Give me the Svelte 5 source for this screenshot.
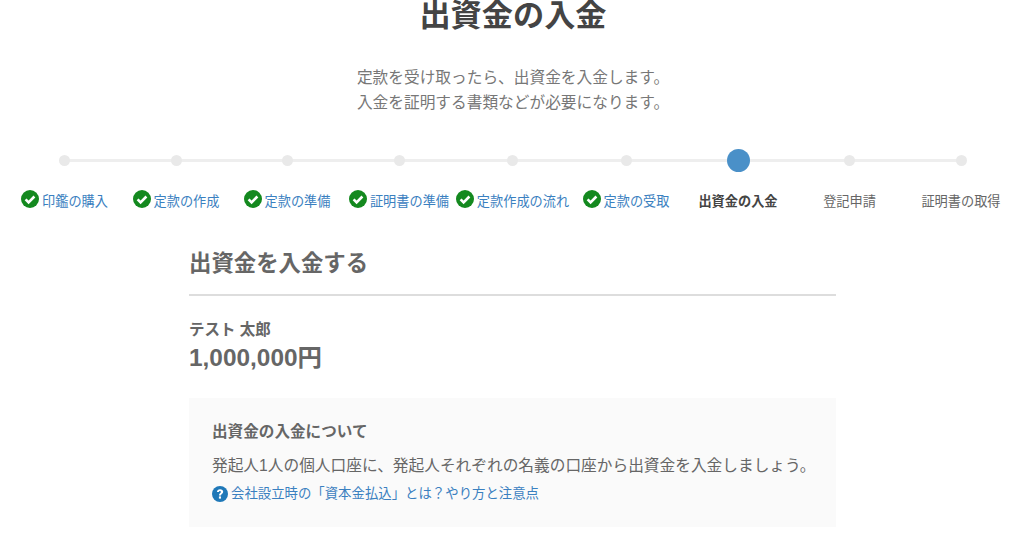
<script>
  const steps = [
    { label: "印鑑の購入", done: true, w: 112 },
    { label: "定款の作成", done: true, w: 111 },
    { label: "定款の準備", done: true, w: 111 },
    { label: "証明書の準備", done: true, w: 113 },
    { label: "定款作成の流れ", done: true, w: 114 },
    { label: "定款の受取", done: true, w: 113 },
    { label: "出資金の入金", current: true, w: 111 },
    { label: "登記申請", w: 112 },
    { label: "証明書の取得", w: 111 },
  ];
</script>

<div class="page">
  <header class="head">
    <h1>出資金の入金</h1>
    <p class="lead">定款を受け取ったら、出資金を入金します。<br />入金を証明する書類などが必要になります。</p>
  </header>

  <ol class="steps">
    {#each steps as step, i}
      <li class="step" class:current={step.current} class:done={step.done} class:first={i === 0} class:last={i === steps.length - 1} style="width: {step.w}px">
        <span class="track"><span class="dot"></span></span>
        <span class="label">
          {#if step.done}
            <svg class="check" viewBox="0 0 18 18" aria-hidden="true">
              <circle cx="9" cy="9" r="9" fill="#14891f" />
              <path d="M4.6 9.3l3 3 5.8-5.8" fill="none" stroke="#fff" stroke-width="2.6" />
            </svg>
          {/if}
          <span class="text">{step.label}</span>
        </span>
      </li>
    {/each}
  </ol>

  <section class="content">
    <h2>出資金を入金する</h2>
    <div class="name">テスト 太郎</div>
    <div class="amount">1,000,000円</div>
    <div class="note">
      <h3>出資金の入金について</h3>
      <p>発起人1人の個人口座に、発起人それぞれの名義の口座から出資金を入金しましょう。</p>
      <a href="#top">
        <svg class="help" viewBox="0 0 16 16" aria-hidden="true">
          <circle cx="8" cy="8" r="8" fill="#1f78b8" />
          <path d="M4.9 6.1C4.9 4.3 6.3 3.2 8.1 3.2c1.8 0 3.1 1.1 3.1 2.6 0 2.1-2.2 2.2-2.2 3.7H6.9c0-2.4 2-2.5 2-3.6 0-.5-.4-.8-.9-.8-.6 0-1 .4-1 1z" fill="#fff" />
          <rect x="6.9" y="10.4" width="2.1" height="2.2" fill="#fff" />
        </svg>
        会社設立時の「資本金払込」とは？やり方と注意点
      </a>
    </div>
  </section>
</div>

<style>
  :global(body) {
    margin: 0;
    background: #fff;
    color: #666;
    font-family: "Liberation Sans", "Noto Sans CJK JP", sans-serif;
  }
  .page {
    height: 539px;
    overflow: hidden;
  }
  .head {
    padding-left: 12px;
    text-align: center;
  }
  h1 {
    margin: 0;
    height: 31px;
    font-size: 31.2px;
    line-height: 31px;
    font-weight: 700;
    color: #444;
  }
  .lead {
    margin: 34px 0 0;
    font-size: 15.7px;
    line-height: 25px;
    color: #777;
  }
  .steps {
    display: flex;
    margin: 33px 0 0 8.5px;
    padding: 0;
    list-style: none;
  }
  .step {
    flex: none;
    display: flex;
    flex-direction: column;
    align-items: center;
  }
  .track {
    position: relative;
    align-self: stretch;
    height: 24px;
    display: flex;
    align-items: center;
    justify-content: center;
  }
  .track::before {
    content: "";
    position: absolute;
    left: 0;
    right: 0;
    top: 10.5px;
    height: 3px;
    background: #eee;
  }
  .first .track::before { left: 50%; }
  .last .track::before { right: 50%; }
  .dot {
    position: relative;
    width: 11px;
    height: 11px;
    border-radius: 50%;
    background: #e9e9e9;
  }
  .current .dot {
    width: 23px;
    height: 23px;
    background: #4a90c8;
  }
  .label {
    margin-top: 17px;
    display: flex;
    align-items: center;
    gap: 3px;
    height: 20px;
    font-size: 13.2px;
    white-space: nowrap;
    color: #666;
  }
  .text { margin-top: 2px; }
  .done .label { color: #3a80c0; }
  .current .label {
    font-weight: 700;
    color: #444;
  }
  .check {
    width: 18px;
    height: 18px;
    flex: none;
  }
  .content {
    width: 647px;
    margin: 39px 0 0 189px;
  }
  h2 {
    margin: 0;
    padding-bottom: 14px;
    border-bottom: 2px solid #ddd;
    font-size: 22.4px;
    line-height: 32px;
    font-weight: 700;
    color: #666;
  }
  .name {
    margin-top: 24px;
    font-size: 15.5px;
    line-height: 20px;
    font-weight: 700;
  }
  .amount {
    margin-top: 2px;
    font-size: 24.4px;
    line-height: 32px;
    font-weight: 700;
  }
  .note {
    margin-top: 24px;
    padding: 23px 23px 23px;
    background: #fafafa;
  }
  h3 {
    margin: 0;
    font-size: 15.6px;
    line-height: 21px;
    font-weight: 700;
  }
  .note p {
    margin: 12px 0 0;
    font-size: 15.7px;
    line-height: 24px;
    white-space: nowrap;
  }
  .note a {
    display: flex;
    align-items: center;
    gap: 3px;
    margin-top: 6px;
    font-size: 13.4px;
    line-height: 20px;
    color: #3a80c0;
    text-decoration: none;
  }
  .help {
    width: 16px;
    height: 16px;
    flex: none;
  }
</style>
